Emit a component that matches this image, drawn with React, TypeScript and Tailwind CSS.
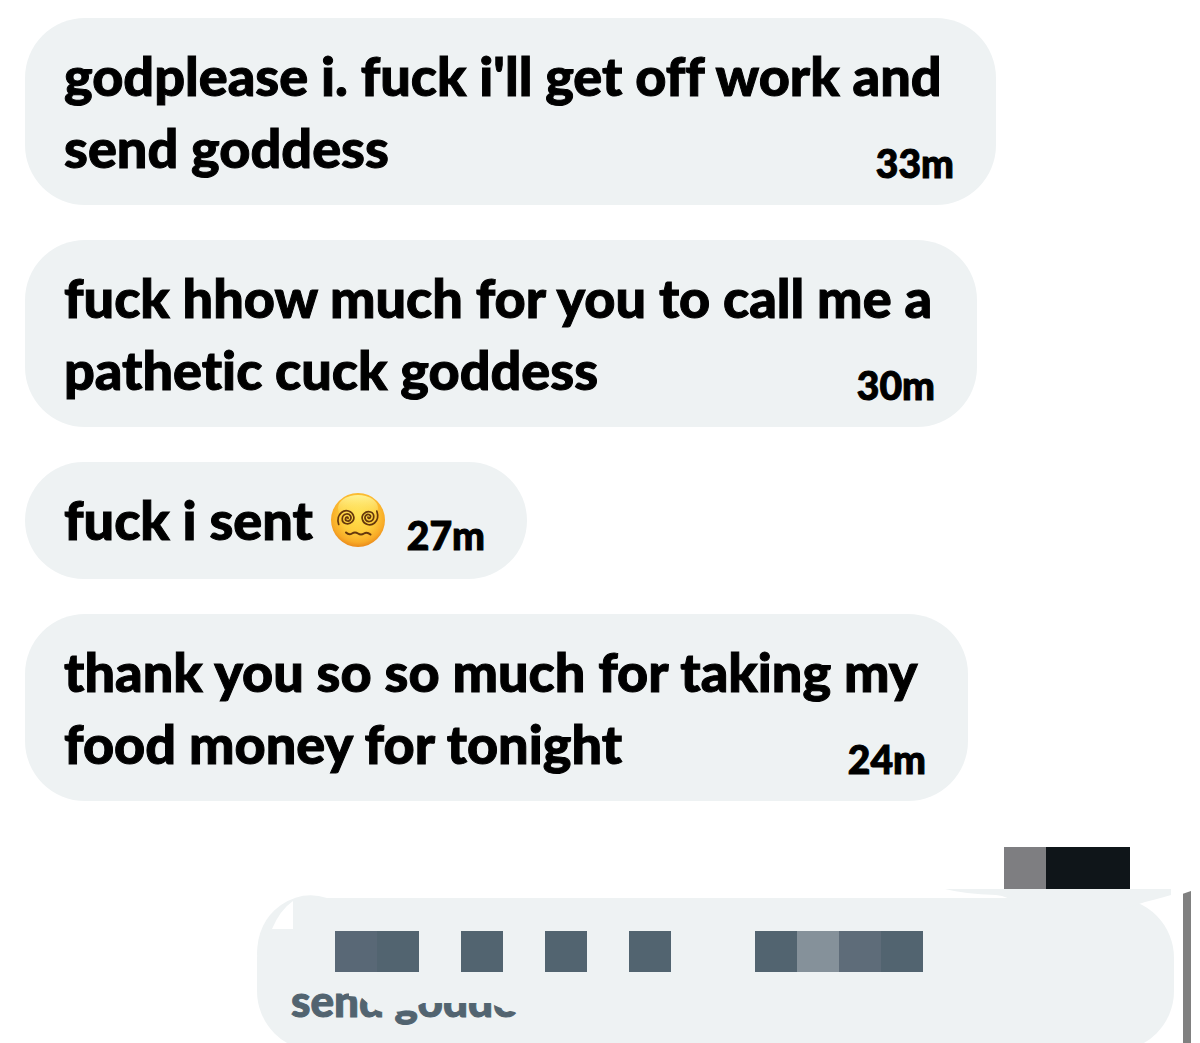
type Message = { first?: string; last: string; time: string; dizzy?: boolean; width: string };

const messages: Message[] = [
  { first: "godplease i. fuck i'll get off work and", last: 'send goddess', time: '33m', width: 'w-[971px]' },
  { first: 'fuck hhow much for you to call me a', last: 'pathetic cuck goddess', time: '30m', width: 'w-[952px]' },
  { last: 'fuck i sent', time: '27m', dizzy: true, width: 'w-[502px]' },
  { first: 'thank you so so much for taking my', last: 'food money for tonight', time: '24m', width: 'w-[943px]' },
];

const blocks = [
  'bg-[#596876]', 'bg-[#526470]', '', 'bg-[#526470]', '', 'bg-[#526470]', '', 'bg-[#526470]',
  '', '', 'bg-[#526470]', 'bg-[#85919a]', 'bg-[#5e6c79]', 'bg-[#526470]',
];

function DizzyFace() {
  return (
    <svg role="img" aria-label="face with spiral eyes" viewBox="0 0 54 54" className="size-[54px] shrink-0">
      <defs>
        <radialGradient id="face" cx="50%" cy="42%" r="58%">
          <stop offset="0" stopColor="#ffe04c" />
          <stop offset="0.55" stopColor="#fecb3a" />
          <stop offset="0.85" stopColor="#f8ab27" />
          <stop offset="1" stopColor="#ea8a1a" />
        </radialGradient>
        <linearGradient id="shine" x1="0" y1="0" x2="0" y2="1">
          <stop offset="0" stopColor="#fff9a0" stopOpacity="0.9" />
          <stop offset="1" stopColor="#ffe458" stopOpacity="0" />
        </linearGradient>
      </defs>
      <circle cx="27" cy="27" r="27" fill="url(#face)" />
      <ellipse cx="27" cy="15" rx="20" ry="13" fill="url(#shine)" />
      <g fill="none" stroke="#65370c" strokeWidth="1.7" strokeLinecap="round">
        <path d="M17 25.500c0.500-1.500-1.500-2-2.300-0.500c-1.200 2.500 2.300 4.300 4.300 2.200c2.600-3-0.300-6.700-3.700-6.200c-5 0.800-5.500 8-0.800 9.500c5 1.500 9.700-3 8-7.700c-1.500-5-8-6.700-12-3.300c-3 2.600-4.500 7-2.800 12" />
        <path d="M37 24c-0.500 1.500 1.500 2 2.300 0.500c1.200-2.500-2.300-4.300-4.300-2.200c-2.600 3 0.300 6.700 3.700 6.200c5-0.800 5.500-8 0.800-9.500c-5-1.500-9.700 3-8 7.700c1.500 5 8 6.700 12 3.300c3-2.600 4-7 2.300-12" />
        <path strokeWidth="2" d="M15 39.500q3 3 6 1t6 0t6 0t6.500 1" />
      </g>
    </svg>
  );
}

function Bubble({ first, last, time, dizzy, width }: Message) {
  return (
    <li className={`${width} min-h-[117px] max-w-full rounded-[60px] bg-[#eef2f3] pt-[22px] pr-[41px] pb-[21px] pl-[39px]`}>
      {first && <p className="text-[54px] leading-[72px] whitespace-nowrap">{first}</p>}
      <div className="flex h-[72px] items-center justify-between">
        <p className="flex items-center gap-[18px] text-[54px] leading-[72px] whitespace-nowrap">
          {last}
          {dizzy && <DizzyFace />}
        </p>
        <time className="self-end pr-px text-[39px] leading-[42px]">{time}</time>
      </div>
    </li>
  );
}

export default function App() {
  return (
    <main className="h-screen overflow-hidden bg-white font-['Lato',sans-serif] font-black text-black [-webkit-text-stroke:1px] [font-variant-ligatures:none]">
      <ul className="flex flex-col items-start gap-[35px] px-[25px] pt-[18px]">
        {messages.map((m) => (
          <Bubble key={m.time} {...m} />
        ))}
      </ul>

      <div className="mt-[46px] flex justify-end pr-[70px]">
        <div className="h-[42px] w-[42px] bg-[#7e7e81]" />
        <div className="h-[42px] w-[84px] bg-[#0f1519]" />
      </div>

      <div className="flex items-start justify-end gap-[9px] pr-[9px]">
        <section className="relative mt-[9px] ml-[257px] h-[153px] flex-1 rounded-[60px] bg-[#eef2f3] pt-[33px] pl-[34px]">
          <svg viewBox="0 0 90 60" className="absolute -top-[3px] left-0 h-[60px] w-[90px]">
            <path d="M0 60Q0 27 24 10Q46 -5 70 3L90 4L60 30L10 60Z" fill="#eef2f3" />
            <path d="M15 34Q23 15 36 6V34Z" fill="#fff" />
          </svg>
          <svg viewBox="0 0 240 36" className="absolute -top-[9px] right-0 h-[36px] w-[240px]">
            <path d="M11 0H237V6Q220 11 211 13L190 20H90Q78 8 62 6Q30 5 11 0Z" fill="#eef2f3" />
          </svg>
          <div className="flex pl-[44px]">
            {blocks.map((color, i) => (
              <div key={i} className={`h-[41px] w-[42px] ${color}`} />
            ))}
          </div>
          <div className="relative w-fit">
            <p className="text-[44px] leading-[56px] text-[#526470]">send godde</p>
            <svg viewBox="0 0 250 56" className="absolute top-0 left-0 h-[56px] w-[250px]">
              <path d="M58 0V24L70 25L80 34Q86 41 98 40Q114 41 132 31H200Q208 37 229 41L240 46H250V0Z" fill="#eef2f3" />
            </svg>
          </div>
        </section>
        <svg viewBox="0 0 8 160" className="mt-[2px] h-[152px] w-[8px]" preserveAspectRatio="none">
          <path d="M0 3L8 0V160H0Z" fill="#808080" />
        </svg>
      </div>
    </main>
  );
}
